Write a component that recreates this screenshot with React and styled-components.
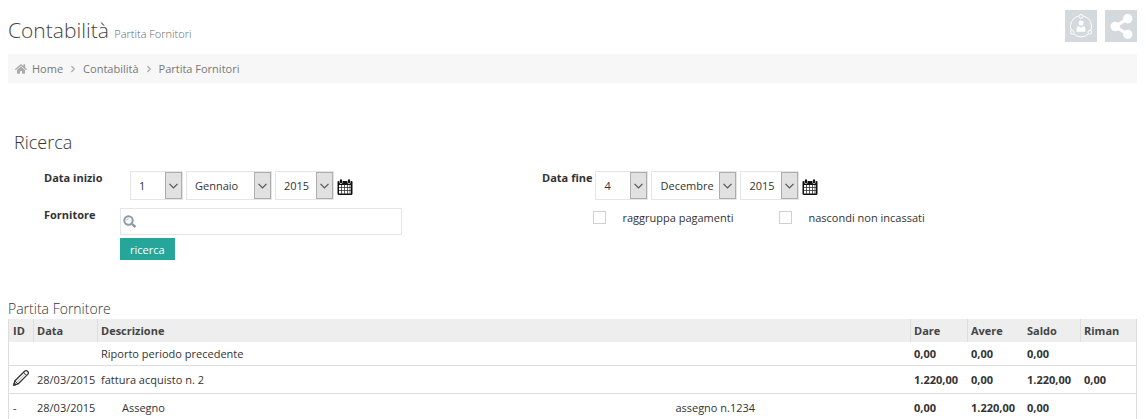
import styled, { createGlobalStyle } from "styled-components"
import { FaHome, FaShareAlt } from "react-icons/fa"
import { FiChevronRight } from "react-icons/fi"

const giorni = Array.from({ length: 31 }, (_, i) => String(i + 1))
const mesi = ["Gennaio", "Febbraio", "Marzo", "Aprile", "Maggio", "Giugno", "Luglio", "Agosto", "Settembre", "Ottobre", "Novembre", "Decembre"]
const anni = ["2013", "2014", "2015", "2016"]

const movimenti = [
  { id: "", data: "", descrizione: "Riporto periodo precedente", dare: "0,00", avere: "0,00", saldo: "0,00", riman: "" },
  { id: "edit", data: "28/03/2015", descrizione: "fattura acquisto n. 2", dare: "1.220,00", avere: "0,00", saldo: "1.220,00", riman: "0,00" },
  { id: "-", data: "28/03/2015", descrizione: "Assegno", nota: "assegno n.1234", dare: "0,00", avere: "1.220,00", saldo: "0,00", riman: "" },
]

function NetworkIcon() {
  return (
    <svg width="24" height="24" viewBox="0 0 24 24" fill="none" stroke="#fff" strokeWidth="1">
      <path d="M9.5 1.9A10.8 10.8 0 0 0 2.2 16.4M4.6 20A10.8 10.8 0 0 0 19.4 20M21.8 16.4A10.8 10.8 0 0 0 14.5 1.9" />
      <circle cx="12" cy="2.4" r="1.9" />
      <circle cx="3.2" cy="18.2" r="1.9" />
      <circle cx="20.8" cy="18.2" r="1.9" />
      <circle cx="12" cy="9" r="2.5" fill="#fff" stroke="none" />
      <path d="M7.6 17.8v-3.2q0-2.4 2.4-2.4l2 1.6 2-1.6q2.4 0 2.4 2.4v3.2z" fill="#fff" stroke="none" />
    </svg>
  )
}

function CalendarIcon() {
  return (
    <svg width="16" height="16" viewBox="0 0 16 16">
      <path d="M1.5 2h13q1 0 1 1v11.5q0 1.5-1.5 1.5H2q-1.5 0-1.5-1.5V3q0-1 1-1z" fill="#111" />
      <path d="M4 1.3v2M12 1.3v2" stroke="#fff" strokeWidth="3.2" strokeLinecap="round" />
      <path d="M4 1.3v2M12 1.3v2" stroke="#111" strokeWidth="2.2" strokeLinecap="round" />
      <path d="M2 6h12v8.500H2z" fill="#fff" />
      <path d="M2 8.5h12M2 11.5h12M4.500 6v9M7.500 6v9M10.500 6v9M13 6v9" stroke="#333" strokeWidth="0.8" />
    </svg>
  )
}

function SearchIcon() {
  return (
    <svg width="14" height="14" viewBox="0 0 14 14" fill="none" stroke="#8e9aa5">
      <circle cx="5.5" cy="5.5" r="4.2" strokeWidth="2" />
      <path d="M8.8 8.8L12.5 12" strokeWidth="2.4" />
      <path d="M3.8 5.5q0-1.7 1.7-1.7" strokeWidth="0.8" />
    </svg>
  )
}

function PencilIcon() {
  return (
    <svg width="16" height="16" viewBox="0 0 16 16" fill="none" stroke="#333" strokeWidth="1.3" strokeLinejoin="round">
      <path d="M0.8 15.2L1.8 11 11.6 1.3Q13.2 0 14.7 1.4 16 2.9 14.7 4.4L5 14z" />
      <path d="M1.8 11l3.2 3M10.5 2.4l3.2 3" strokeWidth="1" />
      <path d="M4.2 12L12 4.2" strokeWidth="0.4" />
      <path d="M0.8 15.2l0.6-2 1.4 1.4z" fill="#333" />
    </svg>
  )
}

function Combo({ label, width, options, value }) {
  return (
    <ComboBox $width={width}>
      <select aria-label={label} defaultValue={value}>
        {options.map((o) => <option key={o}>{o}</option>)}
      </select>
      <Arrow>
        <svg width="9" height="6" viewBox="0 0 9 6" fill="none" stroke="#555" strokeWidth="1.2">
          <path d="M0.5 0.8l4 4 4-4" />
        </svg>
      </Arrow>
    </ComboBox>
  )
}

function DateFields({ name, giorno, mese, anno }) {
  return (
    <>
      <Combo label={`${name} giorno`} width={53} options={giorni} value={giorno} />
      <Combo label={`${name} mese`} width={86} options={mesi} value={mese} />
      <Combo label={`${name} anno`} width={59} options={anni} value={anno} />
      <PlainButton type="button" aria-label={`${name} calendario`} $top={2}>
        <CalendarIcon />
      </PlainButton>
    </>
  )
}

export default function App() {
  return (
    <Page>
      <GlobalStyle />
      <Header>
        <h1>Contabilità <small>Partita Fornitori</small></h1>
        <Actions>
          <ActionButton aria-label="Rete"><NetworkIcon /></ActionButton>
          <ActionButton aria-label="Condividi"><FaShareAlt size={25} /></ActionButton>
        </Actions>
      </Header>

      <Breadcrumb>
        <FaHome size={12} />
        <a href="#home">Home</a>
        <FiChevronRight size={10} strokeWidth={3} />
        <a href="#contabilita">Contabilità</a>
        <FiChevronRight size={10} strokeWidth={3} />
        <a href="#partita">Partita Fornitori</a>
      </Breadcrumb>

      <SearchTitle>Ricerca</SearchTitle>
      <SearchForm onSubmit={(e) => e.preventDefault()}>
        <Column>
          <FieldRow role="group" aria-labelledby="inizio">
            <FieldLabel as="span" id="inizio">Data inizio</FieldLabel>
            <Controls $indent><DateFields name="Data inizio" giorno="1" mese="Gennaio" anno="2015" /></Controls>
          </FieldRow>
          <FieldRow>
            <FieldLabel htmlFor="fornitore">Fornitore</FieldLabel>
            <SupplierBox>
              <SearchIcon />
              <input id="fornitore" type="text" />
            </SupplierBox>
          </FieldRow>
          <SubmitButton type="submit">ricerca</SubmitButton>
        </Column>
        <Column>
          <FieldRow role="group" aria-labelledby="fine">
            <FieldLabel as="span" id="fine" $right>Data fine</FieldLabel>
            <Controls><DateFields name="Data fine" giorno="4" mese="Decembre" anno="2015" /></Controls>
          </FieldRow>
          <Checks>
            <CheckLabel><input type="checkbox" />raggruppa pagamenti</CheckLabel>
            <CheckLabel><input type="checkbox" />nascondi non incassati</CheckLabel>
          </Checks>
        </Column>
      </SearchForm>

      <TableTitle>Partita Fornitore</TableTitle>
      <Table>
        <colgroup>
          <Col $width={24} />
          <Col $width={64} />
          <Col />
          <Col $width={57} />
          <Col $width={56} />
          <Col $width={57} />
          <Col $width={56} />
        </colgroup>
        <thead>
          <tr>
            <Th>ID</Th>
            <Th $line>Data</Th>
            <Th $line>Descrizione</Th>
            <Th $line>Dare</Th>
            <Th $line>Avere</Th>
            <Th>Saldo</Th>
            <Th $line>Riman</Th>
          </tr>
        </thead>
        <tbody>
          {movimenti.map((m, i) => (
            <Row key={i} $tall={i > 0}>
              <td>
                {m.id === "edit"
                  ? <PlainButton type="button" aria-label="Modifica" $bottom={3}><PencilIcon /></PlainButton>
                  : m.id}
              </td>
              <td>{m.data}</td>
              <td>
                {m.nota
                  ? <Detail><span>{m.descrizione}</span><span>{m.nota}</span></Detail>
                  : m.descrizione}
              </td>
              <Amount>{m.dare}</Amount>
              <Amount>{m.avere}</Amount>
              <Amount>{m.saldo}</Amount>
              <Amount>{m.riman}</Amount>
            </Row>
          ))}
        </tbody>
      </Table>
    </Page>
  )
}

const GlobalStyle = createGlobalStyle`
  * {
    box-sizing: border-box;
  }
  body {
    margin: 0;
    background: #fff;
    color: #333;
    font-family: "Open Sans", sans-serif;
    font-size: 11px;
    overflow-x: hidden;
    scrollbar-width: none;
  }
  button, input, select {
    font: inherit;
    color: inherit;
  }
`
const Page = styled.div`
  padding: 10px 9px 0 8px;
`
const Header = styled.header`
  display: flex;
  justify-content: space-between;
  height: 44px;
  h1 {
    margin: 4px 0 0;
    font-size: 21px;
    line-height: 32px;
    font-weight: 300;
    color: #444;
  }
  small {
    font-size: 11px;
    color: #666;
  }
`
const Actions = styled.div`
  display: flex;
  gap: 8px;
`
const ActionButton = styled.button`
  display: flex;
  align-items: center;
  justify-content: center;
  width: 32px;
  height: 32px;
  padding: 0;
  border: 0;
  background: #d3d9dd;
  color: #fff;
`
const Breadcrumb = styled.nav`
  display: flex;
  align-items: center;
  gap: 5px;
  height: 29px;
  padding: 0 7px;
  background: #f7f7f7;
  color: #aaa;
  a {
    color: #777;
    text-decoration: none;
  }
`
const SearchTitle = styled.h2`
  margin: 46px 0 0;
  padding-left: 6px;
  font-size: 18px;
  line-height: 26px;
  font-weight: 300;
`
const SearchForm = styled.form`
  display: grid;
  grid-template-columns: 43% 1fr;
  margin-top: 16px;
`
const Column = styled.div`
  display: flex;
  flex-direction: column;
  align-items: flex-start;
`
const FieldRow = styled.div`
  display: flex;
  margin-bottom: 8px;
  & + & {
    margin-bottom: 3px;
  }
`
const FieldLabel = styled.label`
  width: ${(props) => (props.$right ? "102px" : "112px")};
  padding: ${(props) => (props.$right ? "0 3px 0 0" : "0 0 0 36px")};
  text-align: ${(props) => (props.$right ? "right" : "left")};
  line-height: 14px;
  font-weight: 700;
`
const Controls = styled.div`
  display: flex;
  align-items: center;
  gap: 3px;
  padding-left: ${(props) => (props.$indent ? "10px" : "0")};
`
const ComboBox = styled.div`
  display: flex;
  position: relative;
  width: ${(props) => props.$width}px;
  height: 29px;
  select {
    width: 100%;
    padding: 0 18px 0 8px;
    border: 1px solid #e5e5e5;
    border-radius: 0;
    background: #fff;
    appearance: none;
  }
`
const Arrow = styled.span`
  position: absolute;
  top: 1px;
  right: 1px;
  bottom: 1px;
  width: 17px;
  display: flex;
  align-items: center;
  justify-content: center;
  border: 1px solid #adadad;
  background: #e1e1e1;
  pointer-events: none;
`
const PlainButton = styled.button`
  display: flex;
  padding: ${(props) => props.$top || 0}px 0 ${(props) => props.$bottom || 0}px;
  border: 0;
  background: none;
`
const SupplierBox = styled.div`
  display: flex;
  align-items: center;
  width: 282px;
  height: 27px;
  padding-left: 2px;
  border: 1px solid #e5e5e5;
  input {
    flex: 1;
    min-width: 0;
    height: 25px;
    border: 0;
    outline: 0;
    background: none;
  }
`
const SubmitButton = styled.button`
  margin-left: 112px;
  height: 22px;
  padding: 0 10px;
  border: 0;
  background: #26a69a;
  color: #fff;
`
const Checks = styled.div`
  display: flex;
  gap: 46px;
  margin: 2px 0 0 100px;
`
const CheckLabel = styled.label`
  display: flex;
  align-items: center;
  gap: 16px;
  line-height: 15px;
  input {
    appearance: none;
    width: 13px;
    height: 13px;
    margin: 0;
    border: 1px solid #d0d0d0;
    background: #fff;
  }
`
const TableTitle = styled.h3`
  margin: 39px 0 0;
  font-size: 14px;
  line-height: 20px;
  font-weight: 300;
`
const Table = styled.table`
  width: 100%;
  table-layout: fixed;
  border-collapse: separate;
  border-spacing: 0;
  border: 1px solid #ddd;
  border-width: 0 1px;
  th, td {
    padding: 0 0 0 4px;
    text-align: left;
    white-space: nowrap;
  }
  td {
    border-bottom: 1px solid #ddd;
  }
`
const Col = styled.col`
  width: ${(props) => (props.$width ? `${props.$width}px` : "auto")};
`
const Th = styled.th`
  height: 23px;
  background: #eee;
  color: #444;
  box-shadow: ${(props) => (props.$line ? "inset 1px 0 #ddd" : "none")};
`
const Row = styled.tr`
  height: ${(props) => (props.$tall ? "28px" : "24px")};
`
const Amount = styled.td`
  font-weight: 700;
`
const Detail = styled.div`
  display: grid;
  grid-template-columns: 71% 1fr;
  span:first-child {
    padding-left: 21px;
  }
`
